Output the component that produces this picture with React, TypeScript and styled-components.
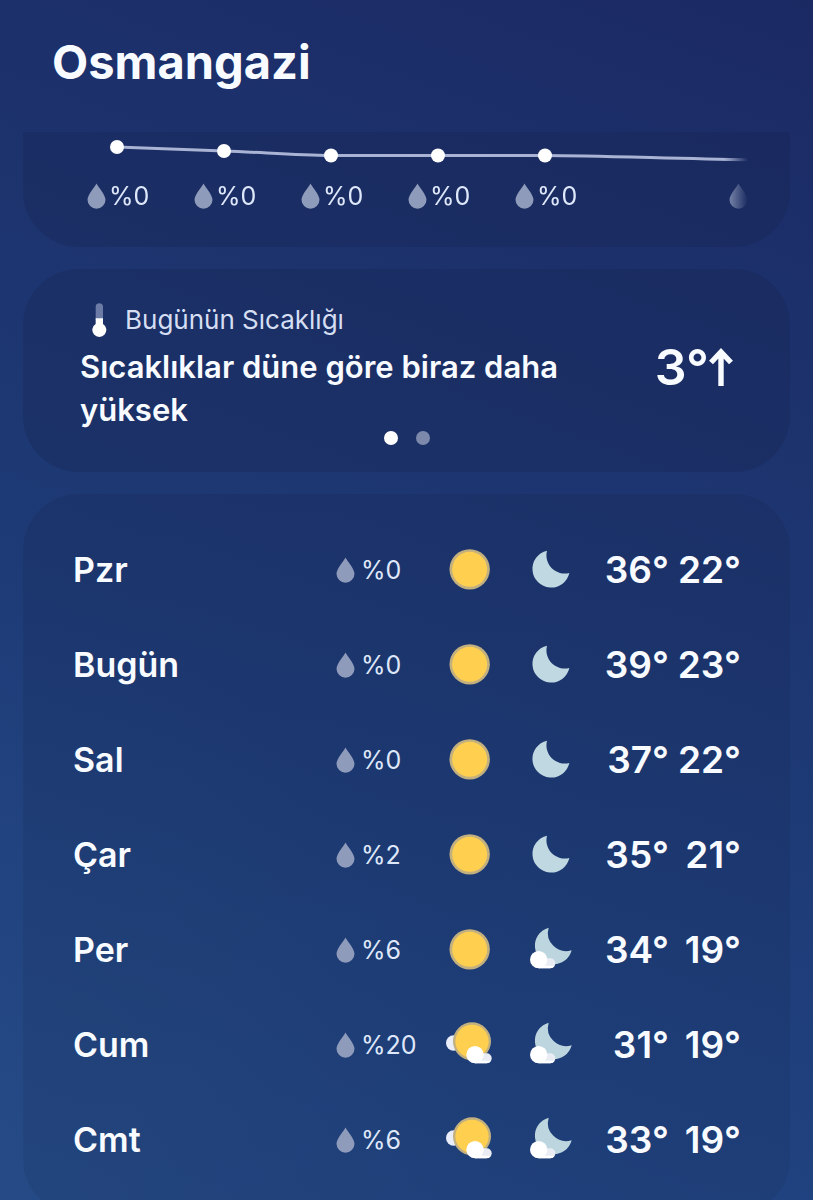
import React from "react";
import styled, { createGlobalStyle } from "styled-components";

const GlobalStyle = createGlobalStyle`
  * { box-sizing: border-box; }
  body {
    margin: 0;
    background: #1c3269;
    color: #f8fbff;
    font-family: Inter, "Noto Sans", sans-serif;
  }
`;

const Screen = styled.div`
  height: 100vh;
  display: flex;
  flex-direction: column;
  background:
    radial-gradient(ellipse 60% 50% at 0% 100%, rgba(42, 80, 134, 0.4), rgba(42, 80, 134, 0)),
    linear-gradient(200deg, #1b2963 0%, #1c306b 20%, #1d3873 48%, #1f407d 74%, #224785 100%);
`;

const Header = styled.header`
  flex: none;
  height: 132px;
  padding: 32px 52px 0;
`;

const City = styled.h1`
  margin: 0;
  font-size: 47px;
  line-height: 60px;
  font-weight: 700;
`;

const Content = styled.main`
  flex: 1;
  min-height: 0;
  padding: 0 23px;
  display: flex;
  flex-direction: column;
  gap: 22px;
  overflow-y: auto;
  scrollbar-width: none;
`;

const Card = styled.section`
  flex: none;
  border-radius: 56px;
  background: rgba(22, 36, 78, 0.3);
`;

const HourlyCard = styled(Card)`
  height: 115px;
  padding: 0 42px 0 41px;
  border-radius: 0 0 56px 56px;
`;

const HourStrip = styled.div`
  overflow: hidden;
  mask-image: linear-gradient(to left, transparent 0, #000 24px);
`;

const TrendLine = styled.svg`
  display: block;
`;

const Hours = styled.ul`
  display: flex;
  margin: 0;
  padding: 0;
  list-style: none;
`;

const Hour = styled.li`
  flex: none;
  width: 107px;
  padding-left: 23px;
`;

const Rain = styled.div<{ $gap: number }>`
  display: flex;
  align-items: center;
  gap: ${(p) => p.$gap}px;
  min-height: 32px;
  font-size: 25px;
  line-height: 32px;
  color: #dfe8fa;
`;

const SummaryCard = styled(Card)`
  padding: 28px 57px 27px;
`;

const SummaryTitle = styled.h2`
  display: flex;
  align-items: center;
  gap: 18px;
  margin: 0 0 2px;
  padding-left: 12px;
  font-size: 26px;
  line-height: 46px;
  font-weight: 400;
  color: #d5def2;
`;

const SummaryBody = styled.div`
  display: flex;
  justify-content: space-between;
  gap: 32px;
`;

const SummaryText = styled.p`
  flex: 1;
  margin: 0;
  font-size: 31px;
  line-height: 43px;
  font-weight: 600;
`;

const Change = styled.div`
  display: flex;
  align-items: center;
  height: 44px;
  font-size: 50px;
  font-weight: 600;
`;

const Dots = styled.div`
  display: flex;
  justify-content: center;
  gap: 18px;
`;

const Dot = styled.button<{ $active?: boolean }>`
  width: 14px;
  height: 14px;
  padding: 0;
  border: 0;
  border-radius: 50%;
  background: ${(p) => (p.$active ? "#ffffff" : "#7c89ab")};
`;

const DailyCard = styled(Card)`
  padding: 28px 49px 28px 50px;
  background: linear-gradient(rgba(22, 38, 82, 0.26), rgba(24, 46, 88, 0.18));
`;

const DailyTable = styled.table`
  width: 100%;
  table-layout: fixed;
  border-collapse: collapse;
`;

const DayRow = styled.tr`
  height: 95px;
`;

const DayName = styled.th`
  padding: 0;
  text-align: left;
  font-size: 34px;
  font-weight: 600;
`;

const Cell = styled.td<{ $width: number; $align?: string }>`
  width: ${(p) => p.$width}px;
  padding: 0;
  text-align: ${(p) => p.$align ?? "left"};
  vertical-align: middle;
  white-space: nowrap;
`;

const Temp = styled(Cell)`
  font-size: 37px;
  font-weight: 600;
`;

const Glyph = styled.svg`
  display: inline-block;
  vertical-align: middle;
`;

function Drop() {
  return (
    <Glyph width="19" height="26" viewBox="0 0 19 26" aria-hidden="true">
      <path d="M9.5 0.5C10.6 3.6 18.5 11.5 18.5 16.7A9 9 0 0 1 0.5 16.7C0.5 11.5 8.4 3.6 9.5 0.5Z" fill="#8f9bbb" />
    </Glyph>
  );
}

function Thermometer() {
  return (
    <Glyph width="15" height="34" viewBox="0 0 45 102" aria-hidden="true">
      <path d="M11 50V12a11 11 0 0 1 22 0v38Z" fill="#6b7ba6" />
      <path d="M11 46h22v17a21 21 0 1 1-22 0Z" fill="#ffffff" />
    </Glyph>
  );
}

function UpArrow() {
  return (
    <Glyph width="24" height="38" viewBox="0 0 24 38" role="img" aria-label="artış">
      <path d="M12 38V4M2 14.5L12 4L22 14.5" fill="none" stroke="#f8fbff" strokeWidth="5.4" />
    </Glyph>
  );
}

function Cloud({ x, y }: { x: number; y: number }) {
  return (
    <g transform={`translate(${x} ${y})`}>
      <path d="M26 22H61A15 15 0 0 1 61 52H26Z" fill="#e9edf3" />
      <path d="M26 44H74A15 15 0 0 1 61 52H26Z" fill="#ffffff" />
      <circle cx="26" cy="26" r="26" fill="#ffffff" />
    </g>
  );
}

function Sun() {
  return (
    <Glyph width="48" height="48" viewBox="0 0 144 144" role="img" aria-label="güneşli">
      <circle cx="71" cy="70" r="60.500" fill="#c3b07f" />
      <circle cx="71" cy="70" r="52.500" fill="#ffcf50" />
    </Glyph>
  );
}

function CloudySun() {
  return (
    <Glyph width="48" height="48" viewBox="0 0 144 144" role="img" aria-label="az bulutlu">
      <circle cx="23" cy="66" r="23" fill="#e9eefa" />
      <circle cx="78" cy="61" r="57" fill="#c3b07f" />
      <circle cx="78" cy="61" r="50" fill="#ffcf50" />
      <Cloud x={61} y={75} />
    </Glyph>
  );
}

function Moon() {
  return (
    <Glyph width="48" height="48" viewBox="0 0 144 144" role="img" aria-label="açık gece">
      <path d="M60 14A56 56 0 1 0 127 81A55 55 0 0 1 60 14Z" fill="#c0d8e1" />
    </Glyph>
  );
}

function CloudyMoon() {
  return (
    <Glyph width="48" height="48" viewBox="0 0 144 144" role="img" aria-label="az bulutlu gece">
      <path d="M65 5A56 56 0 1 0 134 73A55 55 0 0 1 65 5Z" fill="#bcd5df" />
      <Cloud x={9} y={75} />
    </Glyph>
  );
}

const hours = [
  { label: "%0" },
  { label: "%0" },
  { label: "%0" },
  { label: "%0" },
  { label: "%0" },
  null,
  { label: "" },
];

const days = [
  { name: "Pzr", rain: "%0", day: "sun", night: "moon", high: 36, low: 22 },
  { name: "Bugün", rain: "%0", day: "sun", night: "moon", high: 39, low: 23 },
  { name: "Sal", rain: "%0", day: "sun", night: "moon", high: 37, low: 22 },
  { name: "Çar", rain: "%2", day: "sun", night: "moon", high: 35, low: 21 },
  { name: "Per", rain: "%6", day: "sun", night: "cloudy", high: 34, low: 19 },
  { name: "Cum", rain: "%20", day: "cloudy", night: "cloudy", high: 31, low: 19 },
  { name: "Cmt", rain: "%6", day: "cloudy", night: "cloudy", high: 33, low: 19 },
];

export default function App() {
  return (
    <Screen lang="tr">
      <GlobalStyle />
      <Header>
        <City>Osmangazi</City>
      </Header>
      <Content>
        <HourlyCard aria-label="Saatlik tahmin">
          <HourStrip>
            <TrendLine width="749" height="48" viewBox="0 0 749 48" aria-hidden="true">
              <path
                d="M53 15L160 19C195 20 230 23.500 267 23.500H481C530 23.500 620 27 695 28"
                fill="none"
                stroke="#a9b3d3"
                strokeWidth="3"
              />
              {[15, 19, 23.5, 23.5, 23.5].map((y, i) => (
                <circle key={i} cx={53 + i * 107} cy={y} r="7" fill="#ffffff" />
              ))}
            </TrendLine>
            <Hours>
              {hours.map((hour, i) => (
                <Hour key={i}>
                  {hour && (
                    <Rain $gap={3}>
                      <Drop />
                      {hour.label}
                    </Rain>
                  )}
                </Hour>
              ))}
            </Hours>
          </HourStrip>
        </HourlyCard>

        <SummaryCard>
          <SummaryTitle>
            <Thermometer />
            Bugünün Sıcaklığı
          </SummaryTitle>
          <SummaryBody>
            <SummaryText>Sıcaklıklar düne göre biraz daha yüksek</SummaryText>
            <Change>
              3°
              <UpArrow />
            </Change>
          </SummaryBody>
          <Dots>
            <Dot $active aria-label="Sayfa 1" />
            <Dot aria-label="Sayfa 2" />
          </Dots>
        </SummaryCard>

        <DailyCard>
          <DailyTable aria-label="Günlük tahmin">
            <tbody>
              {days.map((d) => (
                <DayRow key={d.name}>
                  <DayName scope="row">{d.name}</DayName>
                  <Cell $width={102}>
                    <Rain $gap={6}>
                      <Drop />
                      {d.rain}
                    </Rain>
                  </Cell>
                  <Cell $width={64} $align="center">
                    {d.day === "sun" ? <Sun /> : <CloudySun />}
                  </Cell>
                  <Cell $width={98} $align="center">
                    {d.night === "moon" ? <Moon /> : <CloudyMoon />}
                  </Cell>
                  <Temp $width={69} $align="right">{d.high}°</Temp>
                  <Temp $width={72} $align="right">{d.low}°</Temp>
                </DayRow>
              ))}
            </tbody>
          </DailyTable>
        </DailyCard>
      </Content>
    </Screen>
  );
}
